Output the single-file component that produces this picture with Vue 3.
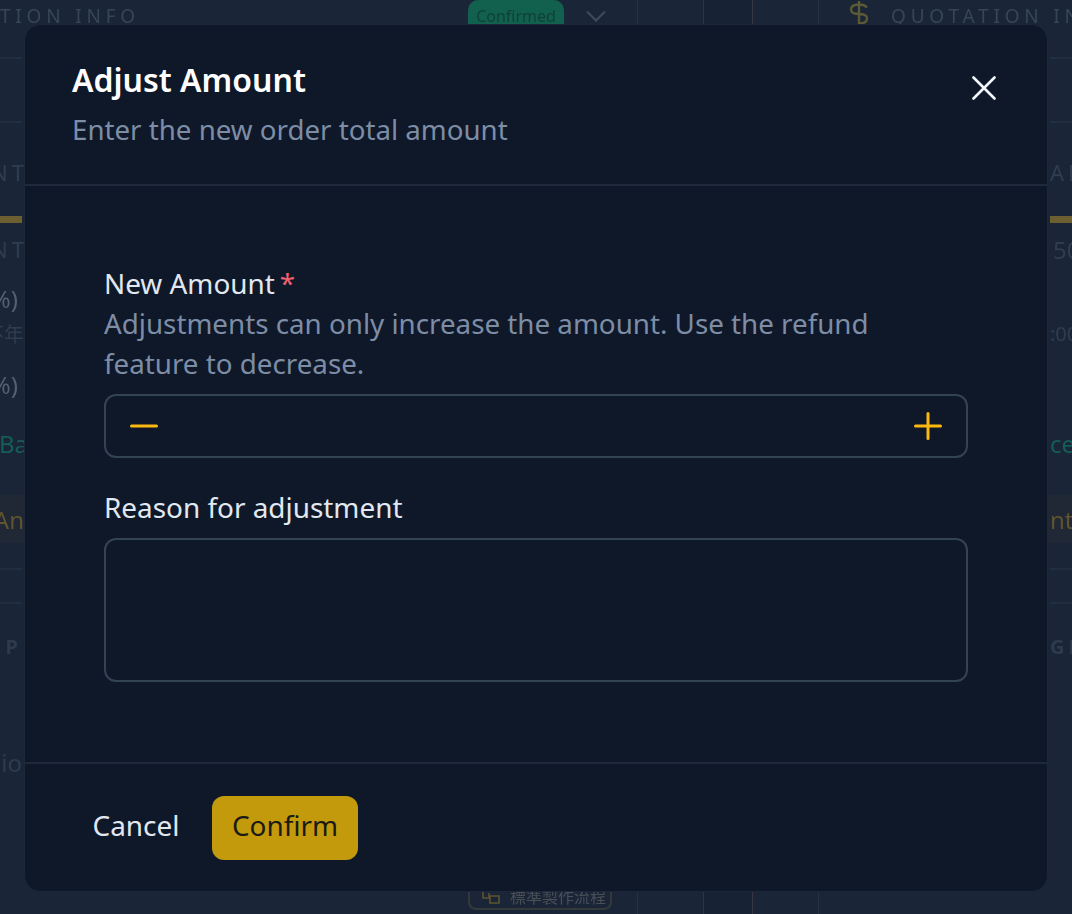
<script setup>
const leftRows = [
  { h: 2, line: true },
  { h: 64, line: true },
  { h: 25 },
  { h: 48, text: 'NT', cls: 'caps' },
  { h: 20 },
  { h: 7, cls: 'bar' },
  { h: 2 },
  { h: 48, text: 'NT', cls: 'caps' },
  { h: 5 },
  { h: 40, text: '%)', cls: 'value' },
  { h: 30, text: '不年', cls: 'cjk' },
  { h: 16 },
  { h: 40, text: '%)', cls: 'value' },
  { h: 19 },
  { h: 40, text: 'Ba', cls: 'teal' },
  { h: 32 },
  { h: 48, text: 'An', cls: 'amber' },
  { h: 27, line: true },
  { h: 34, line: true },
  { h: 18 },
  { h: 48, text: 'P', cls: 'section' },
  { h: 72 },
  { h: 40, text: 'io', cls: 'tail' }
]
const rightRows = [
  { h: 2, line: true },
  { h: 64, line: true },
  { h: 25 },
  { h: 48, text: 'AN', cls: 'caps' },
  { h: 20 },
  { h: 7, cls: 'bar' },
  { h: 2 },
  { h: 48, text: '50', cls: 'value' },
  { h: 45 },
  { h: 30, text: ':00', cls: 'cjk' },
  { h: 75 },
  { h: 40, text: 'ce', cls: 'teal' },
  { h: 32 },
  { h: 48, text: 'nt', cls: 'amber' },
  { h: 27, line: true },
  { h: 34, line: true },
  { h: 18 },
  { h: 48, text: 'GR', cls: 'section' }
]
</script>

<template>
  <div class="page">
    <div class="backdrop">
      <header class="topbar">
        <div class="heading heading-left">TION INFO</div>
        <div class="status">Confirmed</div>
        <svg class="chevron" viewBox="0 0 20 12" fill="none" stroke="currentColor" stroke-width="2.2">
          <path d="M1 1.500 10 10.500 19 1.500" />
        </svg>
        <div class="cell cell-a"></div>
        <div class="cell cell-b"></div>
        <div class="cell cell-c"></div>
        <div class="cell cell-d"></div>
        <svg class="dollar" viewBox="0 0 20 24" fill="none" stroke="currentColor" stroke-width="2.400">
          <path d="M10 0v24M18 6.500C16 4 14 3.500 10 3.500 5 3.500 2 5.500 2 8.500s3 4.500 8 4.500 8 1.500 8 4.500-3 5-8 5" />
        </svg>
        <div class="heading heading-right">QUOTATION INFO</div>
      </header>

      <main class="middle">
        <aside class="strip strip-left">
          <div
            v-for="(row, i) in leftRows"
            :key="i"
            class="strip-row"
            :class="[row.cls, { line: row.line }]"
            :style="{ height: row.h + 'px' }"
          >{{ row.text }}</div>
        </aside>
        <aside class="strip strip-right">
          <div
            v-for="(row, i) in rightRows"
            :key="i"
            class="strip-row"
            :class="[row.cls, { line: row.line }]"
            :style="{ height: row.h + 'px' }"
          >{{ row.text }}</div>
        </aside>
      </main>

      <footer class="bottombar">
        <div class="flow-chip">
          <svg class="flow-icon" viewBox="0 0 18 14" fill="none" stroke="currentColor" stroke-width="1.600">
            <path d="M1 1v7h6V3M8 6h9v7H8z" />
          </svg>
          <span class="flow-text">標準製作流程</span>
        </div>
        <div class="cell cell-e"></div>
        <div class="cell cell-b"></div>
        <div class="cell cell-c"></div>
        <div class="cell cell-d"></div>
      </footer>
    </div>

    <section class="modal">
      <div class="modal-head">
        <div class="head-text">
          <h2 class="title">Adjust Amount</h2>
          <p class="subtitle">Enter the new order total amount</p>
        </div>
        <button class="close" aria-label="Close">
          <svg viewBox="0 0 24 24" fill="none" stroke="currentColor" stroke-width="2.600" stroke-linecap="round">
            <path d="M1.500 1.500 22.500 22.500M22.500 1.500 1.500 22.500" />
          </svg>
        </button>
      </div>

      <div class="modal-body">
        <div class="label">New Amount<span class="req">*</span></div>
        <p class="help">Adjustments can only increase the amount. Use the refund feature to decrease.</p>
        <div class="stepper">
          <svg class="step-icon" viewBox="0 0 28 28" fill="none" stroke="currentColor" stroke-width="3" stroke-linecap="round">
            <path d="M1.500 14h25" />
          </svg>
          <svg class="step-icon" viewBox="0 0 28 28" fill="none" stroke="currentColor" stroke-width="3" stroke-linecap="round">
            <path d="M1.500 14h25M14 1.500v25" />
          </svg>
        </div>
        <div class="label label-reason">Reason for adjustment</div>
        <div class="textarea"></div>
      </div>

      <div class="modal-foot">
        <button class="btn btn-cancel">Cancel</button>
        <button class="btn btn-confirm">Confirm</button>
      </div>
    </section>
  </div>
</template>

<style>
html, body { margin: 0; background: #1a2537; }
</style>

<style scoped>
.page {
  position: relative;
  width: 1072px;
  height: 914px;
  overflow: hidden;
  background: #1a2537;
  font-family: "Noto Sans", "Noto Sans CJK TC", sans-serif;
}
.backdrop {
  display: flex;
  flex-direction: column;
  height: 100%;
  filter: blur(0.5px);
}

/* Page behind the dialog */
.topbar {
  display: flex;
  align-items: flex-start;
  height: 57px;
  flex: none;
  overflow: hidden;
}
.heading {
  font-size: 19px;
  letter-spacing: 4.800px;
  line-height: 32px;
  color: #37455b;
  white-space: nowrap;
}
.heading-left { width: 468px; flex: none; }
.status {
  flex: none;
  width: 96px;
  height: 30px;
  border-radius: 10px 10px 0 0;
  background: #12614f;
  color: #0f3f3a;
  font-size: 16px;
  line-height: 33px;
  text-align: center;
}
.chevron { flex: none; width: 20px; height: 12px; margin: 10px 0 0 22px; color: #3c4a5f; }
.cell { flex: none; height: 57px; border-left: 1px solid #263244; }
.cell-a { margin-left: 31px; width: 65px; }
.cell-b { width: 48px; border-left-color: #2c3544; background: #182235; }
.cell-c { width: 65px; border-left-color: #3a3640; }
.cell-d { width: 30px; }
.dollar { flex: none; width: 20px; height: 24px; margin-top: 1px; color: #5c5a35; }
.heading-right { margin-left: 22px; }

.middle {
  flex: 1;
  display: flex;
  justify-content: space-between;
  min-height: 0;
}
.strip { width: 30px; overflow: hidden; flex: none; }
.strip-row {
  white-space: nowrap;
  box-sizing: border-box;
  display: flex;
  align-items: center;
  color: #3d4a5e;
  font-size: 24px;
}
.strip-left .strip-row { justify-content: flex-end; }
.strip-right .strip-row { justify-content: flex-start; padding-left: 8px; }
.line { border-bottom: 2px solid #212d40; }
.strip-left .line, .strip-left .bar { margin-right: 8px; }
.strip-right .line, .strip-right .bar { margin-left: 8px; }
.bar { background: #6d5f30; }
.caps { letter-spacing: 4px; font-size: 22px; color: #303d51; }
.strip-left .caps { padding-right: 2px; }
.value { color: #556170; }
.strip-left .value { padding-right: 12px; }
.strip-right .value { color: #303d50; padding-left: 11px; }
.cjk { font-size: 20px; color: #303d50; }
.strip-left .cjk { padding-right: 6px; }
.teal { color: #145f55; }
.strip-left .teal { padding-right: 2px; }
.amber { color: #5f5330; background: #1f2834; }
.strip-left .amber { padding-right: 6px; }
.section { font-size: 20px; font-weight: 700; letter-spacing: 4px; color: #2e3b4f; }
.strip-left .section { padding-right: 8px; }
.tail { color: #2f3c50; padding-right: 8px; }

.bottombar {
  flex: none;
  height: 57px;
  margin-top: -35px;
  display: flex;
  align-items: flex-start;
}
.flow-chip {
  flex: none;
  box-sizing: border-box;
  width: 144px;
  height: 53px;
  margin-left: 468px;
  padding: 27px 0 0 12px;
  display: flex;
  align-items: center;
  gap: 10px;
  border: 2px solid #33393b;
  border-radius: 8px;
  color: #4a4f57;
  font-size: 16px;
}
.flow-text { white-space: nowrap; line-height: 20px; }
.flow-icon { width: 18px; height: 14px; color: #5d5330; flex: none; }
.cell-e { margin-left: 25px; width: 65px; }

/* Dialog */
.modal {
  position: absolute;
  left: 24px;
  top: 24px;
  box-sizing: border-box;
  width: 1024px;
  height: 868px;
  display: flex;
  flex-direction: column;
  background: #0f1829;
  border: 1px solid #1c2739;
  border-radius: 16px;
  color: #f1f5f9;
}
.modal-head {
  box-sizing: border-box;
  flex: none;
  height: 161px;
  padding: 33px 51px 0 47px;
  display: flex;
  justify-content: space-between;
  align-items: flex-start;
  border-bottom: 2px solid #1e293b;
}
.title {
  margin: 0;
  font-size: 32px;
  line-height: 44px;
  font-weight: 600;
  color: #ffffff;
}
.subtitle {
  margin: 5px 0 0;
  font-size: 27.700px;
  line-height: 44px;
  color: #7d8da5;
}
.close {
  width: 24px;
  height: 24px;
  margin-top: 18px;
  padding: 0;
  border: none;
  background: none;
  color: #f1f5f9;
}
.close svg { display: block; width: 24px; height: 24px; }

.modal-body {
  flex: 1;
  min-height: 0;
  padding: 77px 79px 0;
  display: flex;
  flex-direction: column;
}
.label {
  font-size: 27.900px;
  line-height: 40px;
  color: #e2e8f0;
}
.req { color: #f0616d; margin-left: 5px; }
.help {
  margin: 0;
  font-size: 27.750px;
  line-height: 40px;
  color: #7d8da5;
}
.stepper {
  box-sizing: border-box;
  flex: none;
  height: 64px;
  margin-top: 11px;
  padding: 0 24px;
  display: flex;
  align-items: center;
  justify-content: space-between;
  border: 2px solid #334352;
  border-radius: 12px;
  color: #fbb80f;
}
.step-icon { width: 28px; height: 28px; display: block; }
.label-reason { margin-top: 29px; }
.textarea {
  box-sizing: border-box;
  flex: none;
  height: 144px;
  margin-top: 11px;
  border: 2px solid #334352;
  border-radius: 12px;
}

.modal-foot {
  box-sizing: border-box;
  flex: none;
  height: 129px;
  padding: 32px 0 0 47px;
  display: flex;
  align-items: flex-start;
  gap: 12px;
  border-top: 2px solid #1e293b;
}
.btn {
  height: 64px;
  padding: 0 0 6px;
  border: none;
  border-radius: 12px;
  font-family: inherit;
  font-size: 27.900px;
  line-height: 40px;
}
.btn-cancel {
  width: 128px;
  background: none;
  color: #e2e8f0;
}
.btn-confirm {
  width: 146px;
  background: #c39a0b;
  color: #1a1a16;
}
</style>
